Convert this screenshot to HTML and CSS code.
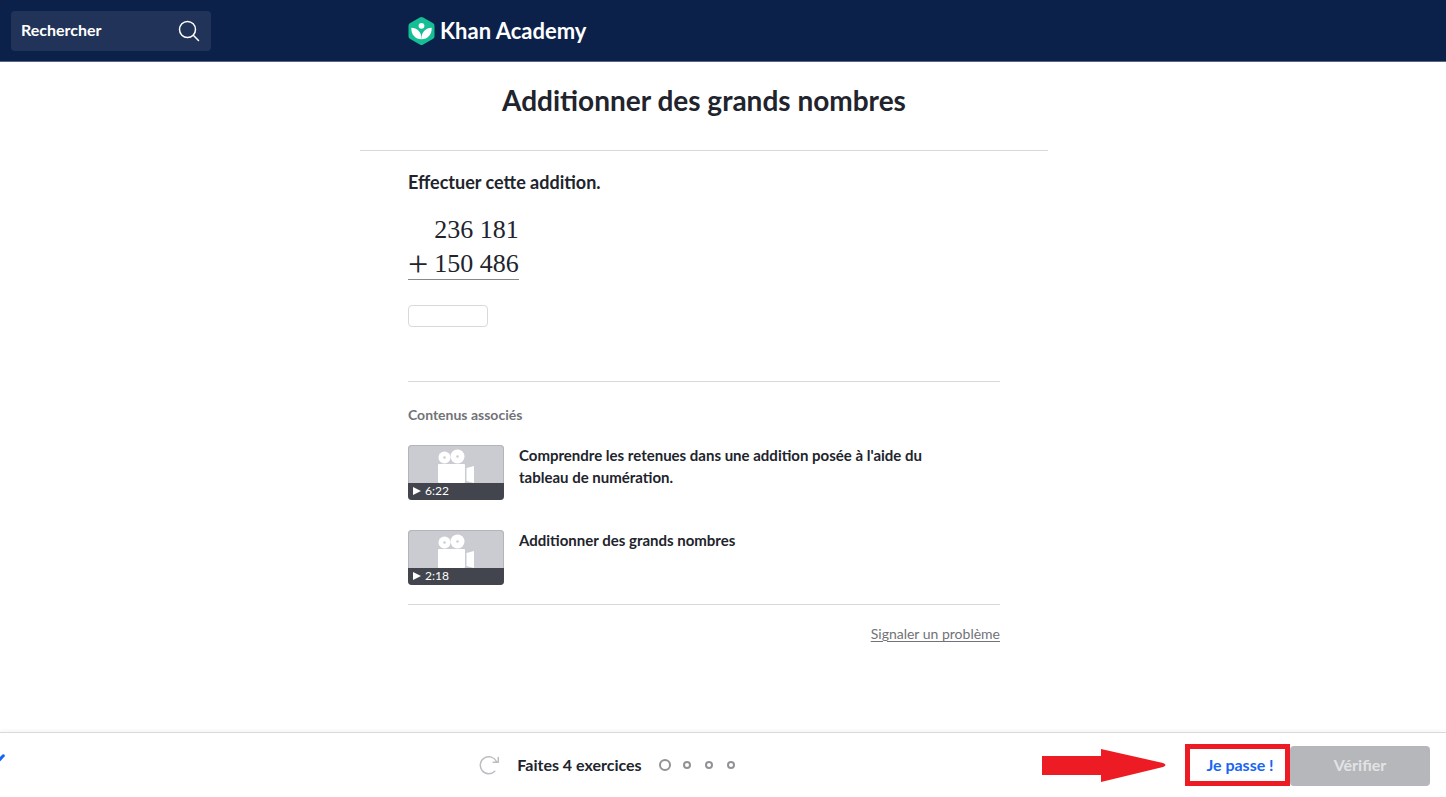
FILE: index.html
```
<!DOCTYPE html>
<html lang="fr">
<head>
    <meta charset="UTF-8">
    <meta name="viewport" content="width=device-width, initial-scale=1.0">
    <title>Additionner des grands nombres</title>
    <link rel="stylesheet" href="styles.css">
</head>
<body>
    <header class="header">
        <button type="button" class="search-button">
            <span>Rechercher</span>
            <svg width="22" height="22" viewBox="0 0 22 22" fill="none" stroke="currentColor" stroke-width="1.5" stroke-linecap="round" aria-hidden="true">
                <circle cx="9.5" cy="9.5" r="8"/>
                <path d="M15.3 15.3L20.5 20.5"/>
            </svg>
        </button>
        <a href="#" class="logo">
            <svg width="27" height="28" viewBox="0 0 26 28" aria-hidden="true">
                <path fill="#14bf96" d="M1.3 6.3L11.3 0.6Q13 -0.4 14.7 0.6L24.7 6.3Q26 7.1 26 8.8V19.2Q26 20.9 24.7 21.7L14.7 27.4Q13 28.4 11.3 27.4L1.3 21.7Q0 20.9 0 19.2V8.8Q0 7.1 1.3 6.3Z"/>
                <circle cx="13" cy="8.8" r="2.9" fill="#fff"/>
                <path fill="#fff" d="M2.8 10.8C8.6 11 13 15 13 21.5V22.3C6.8 22.3 2.6 17.6 2.8 10.8Z"/>
                <path fill="#fff" d="M23.2 10.8C17.4 11 13 15 13 21.5V22.3C19.2 22.3 23.4 17.6 23.2 10.8Z"/>
            </svg>
            <span>Khan Academy</span>
        </a>
    </header>

    <main class="main">
        <h1 class="title">Additionner des grands nombres</h1>

        <div class="exercise">
            <section class="question">
                <label for="answer" class="instruction">Effectuer cette addition.</label>
                <div class="sum">
                    <span class="number">236 181</span>
                    <span class="plus">+</span>
                    <span class="number">150 486</span>
                </div>
                <input type="text" id="answer" class="answer">
            </section>

            <section class="related">
                <h2>Contenus associés</h2>
                <a href="#" class="video">
                    <span class="thumbnail">
                        <svg class="camera" width="38" height="38" viewBox="0 0 38 38" aria-hidden="true">
                            <circle cx="6.5" cy="12.5" r="6"/>
                            <circle cx="19.5" cy="11.5" r="7"/>
                            <rect x="0" y="19" width="27" height="19" rx="1"/>
                            <path d="M28.5 23L36 21V38L28.5 36Z"/>
                            <circle class="reel" cx="6.5" cy="12.5" r="1.2"/>
                            <circle class="reel" cx="19.5" cy="11.5" r="1.2"/>
                        </svg>
                        <span class="duration">
                            <svg width="8" height="8" viewBox="0 0 8 8" aria-hidden="true"><path d="M0 0L8 4L0 8Z"/></svg>
                            6:22
                        </span>
                    </span>
                    <span class="video-title">Comprendre les retenues dans une addition posée à l'aide du tableau de numération.</span>
                </a>
                <a href="#" class="video">
                    <span class="thumbnail">
                        <svg class="camera" width="38" height="38" viewBox="0 0 38 38" aria-hidden="true">
                            <circle cx="6.5" cy="12.5" r="6"/>
                            <circle cx="19.5" cy="11.5" r="7"/>
                            <rect x="0" y="19" width="27" height="19" rx="1"/>
                            <path d="M28.5 23L36 21V38L28.5 36Z"/>
                            <circle class="reel" cx="6.5" cy="12.5" r="1.2"/>
                            <circle class="reel" cx="19.5" cy="11.5" r="1.2"/>
                        </svg>
                        <span class="duration">
                            <svg width="8" height="8" viewBox="0 0 8 8" aria-hidden="true"><path d="M0 0L8 4L0 8Z"/></svg>
                            2:18
                        </span>
                    </span>
                    <span class="video-title">Additionner des grands nombres</span>
                </a>
            </section>

            <div class="report">
                <a href="#">Signaler un problème</a>
            </div>
        </div>
    </main>

    <footer class="footer">
        <svg class="pencil" width="6" height="12" viewBox="0 0 6 12" aria-hidden="true">
            <path d="M0 4L2.4 1.4Q3.8 1 4.6 1.8Q5.2 2.8 4.6 3.6L0 8.4Z" fill="#1865f2"/>
        </svg>
        <div class="progress">
            <svg width="21" height="20" viewBox="0 0 21 20" fill="none" stroke="#babec2" stroke-width="1.5" stroke-linecap="round" stroke-linejoin="round" aria-hidden="true">
                <path d="M15.8 16.3A8.5 8.5 0 1 1 17.6 6.8"/>
                <path d="M19.3 2.5V7.3H14.2"/>
            </svg>
            <span class="progress-text">Faites 4 exercices</span>
            <div class="dots">
                <span class="dot current"></span>
                <span class="dot"></span>
                <span class="dot"></span>
                <span class="dot"></span>
            </div>
        </div>
        <div class="actions">
            <svg class="arrow" width="124" height="34" viewBox="0 0 124 34" aria-hidden="true">
                <path d="M0 8H59V1L121 15Q126 17 121 19L59 34V27H0Z" fill="#ed1c24"/>
            </svg>
            <button type="button" class="skip">Je passe !</button>
            <button type="button" class="check" disabled>Vérifier</button>
        </div>
    </footer>
</body>
</html>
```
FILE: styles.css
```
* {
    box-sizing: border-box;
}

body {
    margin: 0;
    min-height: 100vh;
    display: flex;
    flex-direction: column;
    font-family: Lato, sans-serif;
    color: #21242c;
    background: #fff;
}

button {
    font-family: inherit;
    font-size: 16px;
    font-weight: bold;
    border: none;
    cursor: pointer;
}

.header {
    display: grid;
    grid-template-columns: 1fr minmax(0, 592px) 1fr;
    align-items: center;
    height: 62px;
    padding-right: 38px;
    background: #0b2149;
    border-bottom: 1px solid #566481;
    color: #fff;
}

.search-button {
    display: flex;
    align-items: center;
    justify-content: space-between;
    width: 200px;
    height: 40px;
    margin-left: 11px;
    padding: 0 11px 0 10px;
    border-radius: 4px;
    background: #213358;
    color: #fff;
}

.search-button span {
    padding-bottom: 2px;
}

.logo {
    display: flex;
    align-items: center;
    gap: 5px;
    color: #fff;
    font-size: 22px;
    font-weight: bold;
    text-decoration: none;
}

.main {
    flex: 1;
    display: flex;
    flex-direction: column;
    align-items: center;
    padding-right: 38px;
}

.title {
    width: 100%;
    max-width: 688px;
    margin: 0;
    padding: 22px 0 34px;
    border-bottom: 1px solid #d8d9db;
    font-size: 28px;
    line-height: 32px;
    text-align: center;
}

.exercise {
    width: 100%;
    max-width: 592px;
}

.question {
    display: flex;
    flex-direction: column;
    align-items: flex-start;
    padding: 20px 0 54px;
    border-bottom: 1px solid #d8d9db;
}

.instruction {
    font-size: 18px;
    font-weight: bold;
    line-height: 23px;
}

.sum {
    display: grid;
    grid-template-columns: auto auto;
    gap: 4px 6px;
    margin: 21px 0 25px;
    border-bottom: 1px solid #888;
    font-family: "Liberation Serif", serif;
    font-size: 26px;
    line-height: 30px;
}

.number {
    grid-column: 2;
}

.plus {
    grid-column: 1;
    grid-row: 2;
    font-size: 36px;
}

.answer {
    width: 80px;
    height: 22px;
    padding: 0 4px;
    border: 1px solid #d8d9db;
    border-radius: 4px;
    font-size: 16px;
}

.related {
    padding: 23px 0 19px;
    border-bottom: 1px solid #d8d9db;
}

.related h2 {
    margin: 0;
    font-size: 14px;
    line-height: 20px;
    color: #717378;
}

.video {
    display: flex;
    gap: 15px;
    margin-top: 20px;
    color: inherit;
    text-decoration: none;
}

.video + .video {
    margin-top: 30px;
}

.thumbnail {
    flex: none;
    display: flex;
    flex-direction: column;
    align-items: center;
    width: 96px;
    height: 55px;
    overflow: hidden;
    border-radius: 4px;
    background: #cbccd1;
    box-shadow: inset 0 0 0 1px #b4b5ba;
}

.camera {
    fill: #fff;
    flex: none;
    margin-right: -2px;
}

.camera .reel {
    fill: #cbccd1;
}

.duration {
    display: flex;
    align-items: center;
    gap: 4px;
    align-self: stretch;
    flex: 1;
    padding: 0 0 2px 5px;
    background: #42454d;
    color: #fff;
    font-size: 12px;
}

.duration svg {
    fill: #fff;
}

.video-title {
    max-width: 420px;
    margin-top: -1px;
    font-size: 15px;
    font-weight: bold;
    line-height: 22px;
}

.report {
    padding: 19px 0;
    text-align: right;
    font-size: 14px;
    line-height: 20px;
}

.report a {
    color: #717378;
    text-underline-offset: 2px;
}

.footer {
    display: grid;
    grid-template-columns: 1fr 2fr;
    column-gap: 4px;
    align-items: center;
    height: 65px;
    padding-right: 16px;
    border-top: 1px solid #d8d9db;
    box-shadow: 0 -1px 4px rgba(33, 36, 44, 0.06);
}

.pencil {
    align-self: start;
    margin-top: 20px;
}

.progress,
.actions,
.dots {
    display: flex;
    align-items: center;
}

.progress {
    grid-row: 1;
    grid-column: 2;
    gap: 17px;
}

.progress-text {
    padding-bottom: 2px;
    font-size: 16px;
    font-weight: bold;
}

.dots {
    gap: 14px;
}

.dot {
    width: 8px;
    height: 8px;
    border: 2px solid #909296;
    border-radius: 50%;
}

.dot.current {
    width: 12px;
    height: 12px;
    margin-right: -2px;
}

.actions {
    grid-row: 1;
    grid-column: 2;
    justify-self: end;
    align-items: flex-end;
}

.arrow {
    align-self: center;
    margin-right: 19px;
}

.skip {
    width: 105px;
    height: 42px;
    padding: 0 0 2px 5px;
    border: 5px solid #ed1c24;
    background: #fff;
    color: #1865f2;
}

.check {
    width: 140px;
    height: 40px;
    padding: 0 0 3px;
    border-radius: 4px;
    background: #b6b7ba;
    color: #e2e3e5;
    cursor: default;
}
```
